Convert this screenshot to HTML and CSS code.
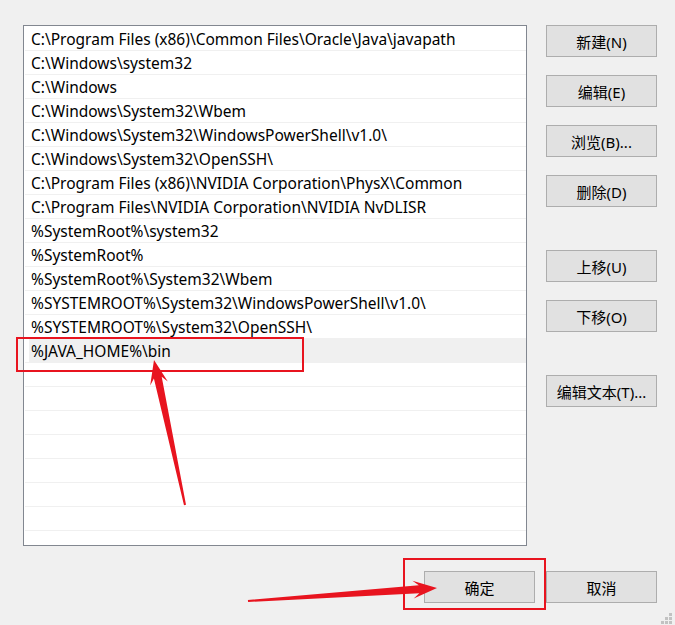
FILE: index.html
```html
<!DOCTYPE html>
<html>
<head>
    <meta charset="utf-8">
    <link rel="stylesheet" href="styles.css">
</head>
<body>
    <div class="dialog">
        <div class="main">
            <div class="path-list">
                <div class="row">C:\Program Files (x86)\Common Files\Oracle\Java\javapath</div>
                <div class="row">C:\Windows\system32</div>
                <div class="row">C:\Windows</div>
                <div class="row">C:\Windows\System32\Wbem</div>
                <div class="row">C:\Windows\System32\WindowsPowerShell\v1.0\</div>
                <div class="row">C:\Windows\System32\OpenSSH\</div>
                <div class="row">C:\Program Files (x86)\NVIDIA Corporation\PhysX\Common</div>
                <div class="row">C:\Program Files\NVIDIA Corporation\NVIDIA NvDLISR</div>
                <div class="row">%SystemRoot%\system32</div>
                <div class="row">%SystemRoot%</div>
                <div class="row">%SystemRoot%\System32\Wbem</div>
                <div class="row">%SYSTEMROOT%\System32\WindowsPowerShell\v1.0\</div>
                <div class="row">%SYSTEMROOT%\System32\OpenSSH\</div>
                <div class="row selected">%JAVA_HOME%\bin</div>
                <div class="row"></div>
                <div class="row"></div>
                <div class="row"></div>
                <div class="row"></div>
                <div class="row"></div>
                <div class="row"></div>
                <div class="row"></div>
                <div class="row"></div>
            </div>
            <div class="side-buttons">
                <div class="group">
                    <button class="btn">新建(N)</button>
                    <button class="btn">编辑(E)</button>
                    <button class="btn">浏览(B)...</button>
                    <button class="btn">删除(D)</button>
                </div>
                <div class="group">
                    <button class="btn">上移(U)</button>
                    <button class="btn">下移(O)</button>
                </div>
                <button class="btn">编辑文本(T)...</button>
            </div>
        </div>
        <div class="footer">
            <button class="btn">确定</button>
            <button class="btn">取消</button>
        </div>
    </div>

    <!-- resize grip -->
    <svg class="grip" width="14" height="14" viewBox="0 0 14 14">
        <rect x="9" y="1" width="3" height="3" fill="#c2c2c2"/>
        <rect x="5" y="5" width="3" height="3" fill="#c2c2c2"/>
        <rect x="9" y="5" width="3" height="3" fill="#c2c2c2"/>
        <rect x="1" y="9" width="3" height="3" fill="#c2c2c2"/>
        <rect x="5" y="9" width="3" height="3" fill="#c2c2c2"/>
        <rect x="9" y="9" width="3" height="3" fill="#c2c2c2"/>
    </svg>

    <!-- screenshot annotations -->
    <svg class="marks" width="675" height="625" viewBox="0 0 675 625">
        <rect x="17" y="338" width="286" height="33" fill="none" stroke="#e8141f" stroke-width="2"/>
        <rect x="404" y="559" width="141" height="50" fill="none" stroke="#e8141f" stroke-width="2"/>
        <polygon fill="#e8141f" points="184,505.2 153.9,378.4 150.2,385.4 154,360 167.8,381.6 161.7,376.8 186,504.8"/>
        <polygon fill="#e8141f" points="247.9,600 418.8,585.2 412.4,580.7 437,588 413.7,598.6 419.3,593.2 248.1,602"/>
    </svg>
</body>
</html>
```

FILE: styles.css
```css
body {
    margin: 0;
    width: 675px;
    height: 625px;
    background-color: #f0f0f0;
    font-family: "Noto Sans", "Noto Sans CJK SC", sans-serif;
    font-size: 15px;
    color: #000000;
    overflow: hidden;
}
.dialog {
    padding: 25px 18px 0 23px;
}
.main {
    display: flex;
    align-items: flex-start;
}
.path-list {
    width: 502px;
    height: 518px;
    padding: 1px 0 0 1px;
    box-sizing: content-box;
    border: 1px solid #828790;
    background-color: #ffffff;
    overflow: hidden;
}
.row {
    height: 24px;
    box-sizing: border-box;
    border-bottom: 1px solid #f0f0f0;
    padding: 1px 0 0 6px;
    font-size: 15.5px;
    line-height: 22px;
    white-space: nowrap;
}
.row.selected {
    background: linear-gradient(to right, transparent 4px, #f0f0f0 4px);
}
.side-buttons {
    display: flex;
    flex-direction: column;
    gap: 43px;
    margin-left: 19px;
}
.group {
    display: flex;
    flex-direction: column;
    gap: 18px;
}
.btn {
    width: 111px;
    height: 32px;
    padding: 0;
    border: 1px solid #adadad;
    background-color: #e1e1e1;
    font-family: "Noto Sans", "Noto Sans CJK SC", sans-serif;
    font-size: 15px;
    color: #000000;
    white-space: nowrap;
}
.footer {
    display: flex;
    justify-content: flex-end;
    gap: 11px;
    margin-top: 25px;
}
.grip {
    position: absolute;
    left: 660px;
    top: 612px;
}
.marks {
    position: absolute;
    left: 0;
    top: 0;
    pointer-events: none;
}
```
